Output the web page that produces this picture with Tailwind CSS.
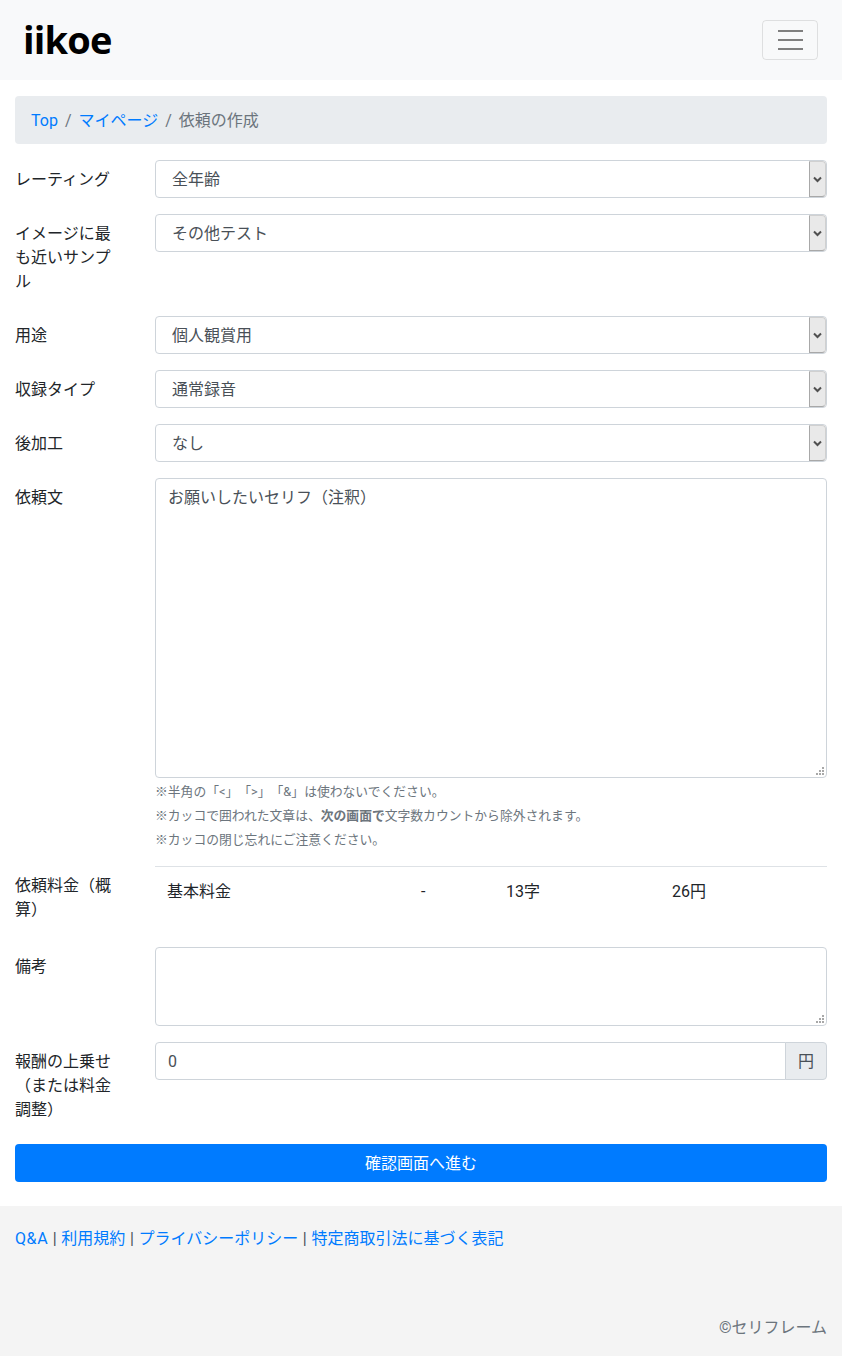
<!DOCTYPE html>
<html lang="ja">
<head>
<meta charset="utf-8">
<title>依頼の作成</title>
<script src="https://cdn.jsdelivr.net/npm/@tailwindcss/browser@4"></script>
</head>
<body class="bg-white text-[#212529] text-base leading-6 [text-spacing-trim:space-all] font-['Roboto','Noto_Sans_CJK_JP',sans-serif]">

<!-- nav -->
<nav class="h-20 bg-[#f8f9fa] flex items-center justify-between pl-[23px] pr-6">
  <a class="-mt-[3px] text-[38px] leading-none font-bold text-black tracking-[-0.8px] font-['Open_Sans',sans-serif]">iikoe</a>
  <button class="w-14 h-10 border border-black/10 rounded flex flex-col items-center justify-center gap-[7px]">
    <span class="block w-[25px] h-0.5 bg-[#7f7f7f]"></span>
    <span class="block w-[25px] h-0.5 bg-[#7f7f7f]"></span>
    <span class="block w-[25px] h-0.5 bg-[#7f7f7f]"></span>
  </button>
</nav>

<main class="px-[15px] pt-4">
  <div class="h-12 mb-4 px-4 pt-0.5 bg-[#e9ecef] rounded flex items-center gap-[7px] text-[#6c757d]">
    <a class="text-[#007bff]">Top</a><span>/</span><a class="text-[#007bff]">マイページ</a><span>/</span><span>依頼の作成</span>
  </div>

  <form class="flex flex-col gap-4">
    <div class="flex">
      <label class="w-[140px] shrink-0 pr-[30px] pt-2 pb-1.5">レーティング</label>
      <div class="relative grow h-[38px]">
        <select class="appearance-none w-full h-full border border-[#ced4da] rounded pl-4 pt-0.5 text-[#495057] bg-white"><option>全年齢</option></select>
        <span class="absolute right-px top-px bottom-px w-[17px] bg-[#e9e9e9] border border-[#a8a8a8] border-t-[#d0d0d0] border-r-[#d0d0d0] rounded-r-sm flex items-center justify-center">
          <svg width="9" height="7" viewBox="0 0 9 7"><path d="M1 1.5l3.5 3.5L8 1.5" fill="none" stroke="#505050" stroke-width="2"/></svg>
        </span>
      </div>
    </div>

    <div class="flex">
      <label class="w-[140px] shrink-0 pr-[30px] pt-2 pb-1.5">イメージに最も近いサンプル</label>
      <div class="relative grow h-[38px]">
        <select class="appearance-none w-full h-full border border-[#ced4da] rounded pl-4 pt-0.5 text-[#495057] bg-white"><option>その他テスト</option></select>
        <span class="absolute right-px top-px bottom-px w-[17px] bg-[#e9e9e9] border border-[#a8a8a8] border-t-[#d0d0d0] border-r-[#d0d0d0] rounded-r-sm flex items-center justify-center">
          <svg width="9" height="7" viewBox="0 0 9 7"><path d="M1 1.5l3.5 3.5L8 1.5" fill="none" stroke="#505050" stroke-width="2"/></svg>
        </span>
      </div>
    </div>

    <div class="flex">
      <label class="w-[140px] shrink-0 pr-[30px] pt-2 pb-1.5">用途</label>
      <div class="relative grow h-[38px]">
        <select class="appearance-none w-full h-full border border-[#ced4da] rounded pl-4 pt-0.5 text-[#495057] bg-white"><option>個人観賞用</option></select>
        <span class="absolute right-px top-px bottom-px w-[17px] bg-[#e9e9e9] border border-[#a8a8a8] border-t-[#d0d0d0] border-r-[#d0d0d0] rounded-r-sm flex items-center justify-center">
          <svg width="9" height="7" viewBox="0 0 9 7"><path d="M1 1.5l3.5 3.5L8 1.5" fill="none" stroke="#505050" stroke-width="2"/></svg>
        </span>
      </div>
    </div>

    <div class="flex">
      <label class="w-[140px] shrink-0 pr-[30px] pt-2 pb-1.5">収録タイプ</label>
      <div class="relative grow h-[38px]">
        <select class="appearance-none w-full h-full border border-[#ced4da] rounded pl-4 pt-0.5 text-[#495057] bg-white"><option>通常録音</option></select>
        <span class="absolute right-px top-px bottom-px w-[17px] bg-[#e9e9e9] border border-[#a8a8a8] border-t-[#d0d0d0] border-r-[#d0d0d0] rounded-r-sm flex items-center justify-center">
          <svg width="9" height="7" viewBox="0 0 9 7"><path d="M1 1.5l3.5 3.5L8 1.5" fill="none" stroke="#505050" stroke-width="2"/></svg>
        </span>
      </div>
    </div>

    <div class="flex">
      <label class="w-[140px] shrink-0 pr-[30px] pt-2 pb-1.5">後加工</label>
      <div class="relative grow h-[38px]">
        <select class="appearance-none w-full h-full border border-[#ced4da] rounded pl-4 pt-0.5 text-[#495057] bg-white"><option>なし</option></select>
        <span class="absolute right-px top-px bottom-px w-[17px] bg-[#e9e9e9] border border-[#a8a8a8] border-t-[#d0d0d0] border-r-[#d0d0d0] rounded-r-sm flex items-center justify-center">
          <svg width="9" height="7" viewBox="0 0 9 7"><path d="M1 1.5l3.5 3.5L8 1.5" fill="none" stroke="#505050" stroke-width="2"/></svg>
        </span>
      </div>
    </div>

    <div class="flex">
      <label class="w-[140px] shrink-0 pr-[30px] pt-2 pb-1.5">依頼文</label>
      <div class="grow min-w-0">
        <div class="relative">
          <textarea class="block w-full h-[300px] resize-none border border-[#ced4da] rounded px-3 pt-[7px] pb-1.5 text-[#495057]">お願いしたいセリフ（注釈）</textarea>
          <svg class="absolute right-[3px] bottom-[3px]" width="8" height="8" viewBox="0 0 8 8" fill="#a8a8a8"><path d="M6 0h2v2H6zM3 3h2v2H3zM6 3h2v2H6zM0 6h2v2H0zM3 6h2v2H3zM6 6h2v2H6z"/></svg>
        </div>
        <p class="text-[12.8px] leading-6 text-[#6c757d] mt-0.5">※半角の「&lt;」「&gt;」「&amp;」は使わないでください。<br>※カッコで囲われた文章は、<b>次の画面で</b>文字数カウントから除外されます。<br>※カッコの閉じ忘れにご注意ください。</p>
      </div>
    </div>

    <div class="flex -mt-0.5">
      <label class="w-[140px] shrink-0 pr-[30px] pt-2 pb-1.5">依頼料金（概算）</label>
      <div class="grow border-t border-[#dee2e6] pl-3 pt-[13px] flex h-[65px]">
        <span class="w-[254px]">基本料金</span>
        <span class="w-[85px]">-</span>
        <span class="w-[166px]">13字</span>
        <span>26円</span>
      </div>
    </div>

    <div class="flex">
      <label class="w-[140px] shrink-0 pr-[30px] pt-2 pb-1.5">備考</label>
      <div class="relative grow h-[79px]">
        <textarea class="block w-full h-full resize-none border border-[#ced4da] rounded px-3 py-1.5"></textarea>
        <svg class="absolute right-[3px] bottom-[3px]" width="8" height="8" viewBox="0 0 8 8" fill="#a8a8a8"><path d="M6 0h2v2H6zM3 3h2v2H3zM6 3h2v2H6zM0 6h2v2H0zM3 6h2v2H3zM6 6h2v2H6z"/></svg>
      </div>
    </div>

    <div class="flex">
      <label class="w-[140px] shrink-0 pr-[30px] pt-2 pb-1.5">報酬の上乗せ（または料金調整）</label>
      <div class="grow h-[38px] flex">
        <input value="0" class="grow min-w-0 border border-[#ced4da] rounded-l px-3 pt-0.5 text-[#495057]">
        <span class="w-[42px] -ml-px pt-0.5 border border-[#ced4da] rounded-r bg-[#e9ecef] flex items-center justify-center text-[#495057]">円</span>
      </div>
    </div>

    <button type="button" class="h-[38px] w-full pt-0.5 bg-[#007bff] text-white rounded">確認画面へ進む</button>
  </form>
</main>

<footer class="mt-6 h-[150px] bg-[#f4f4f4] px-[15px] pt-[21px] flex flex-col">
  <div class="text-[#495057] [word-spacing:0.65px]"><a class="text-[#007bff] tracking-[0.6px]">Q&amp;A</a> | <a class="text-[#007bff]">利用規約</a> | <a class="text-[#007bff]">プライバシーポリシー</a> | <a class="text-[#007bff]">特定商取引法に基づく表記</a></div>
  <div class="text-right text-[#6c757d] mt-[65px]">©セリフレーム</div>
</footer>

</body>
</html>
